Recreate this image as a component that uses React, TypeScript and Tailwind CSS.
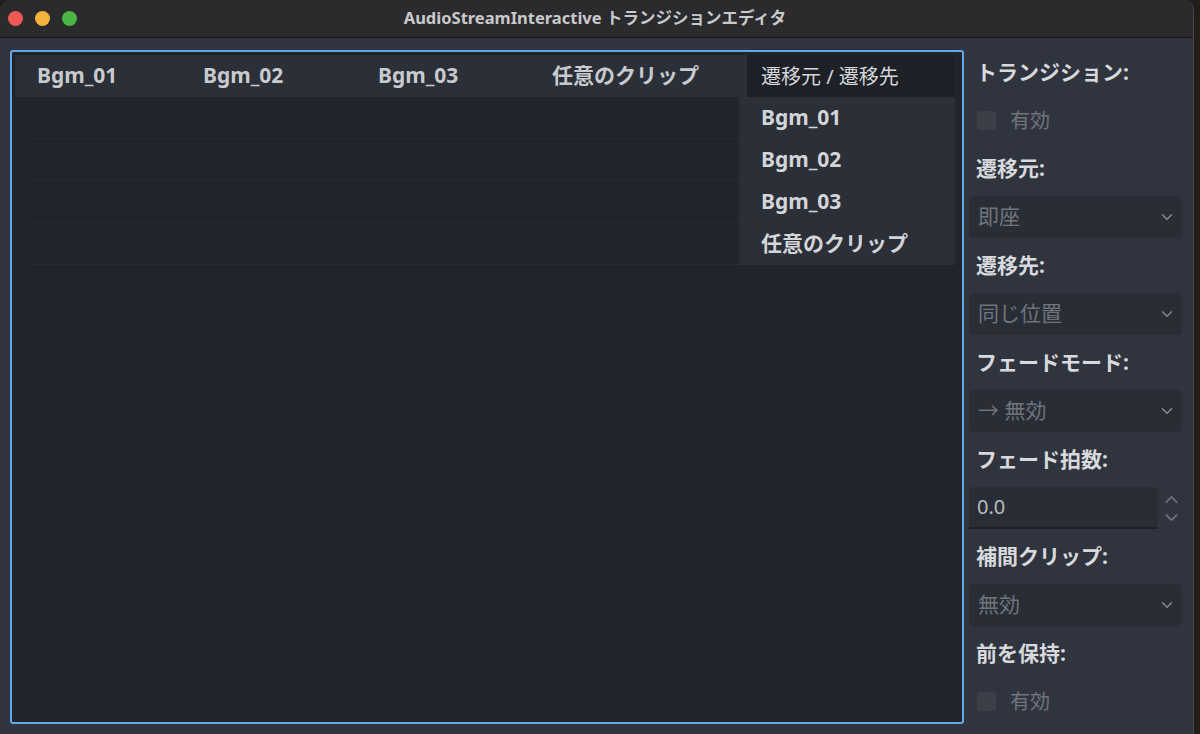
import { ChevronDown, ChevronUp } from "lucide-react";

const font = { fontFamily: '"Noto Sans", "Noto Sans CJK JP", sans-serif' };

const columns = [
  { name: "Bgm_01", w: "w-[166px]" },
  { name: "Bgm_02", w: "w-[175px]" },
  { name: "Bgm_03", w: "w-[174px]" },
  { name: "任意のクリップ", w: "w-[217px]" },
];

function Label({ text }: { text: string }) {
  return (
    <div className="h-[55px] flex items-center pl-[7px] text-[21px] font-bold text-[#d8d9dc]">
      {text}
    </div>
  );
}

function Select({ value }: { value: string }) {
  return (
    <div className="h-[42px] w-[213px] rounded-[5px] bg-[#292d35] flex items-center justify-between pl-[9px] pr-[6px] text-[21px] text-[#6f747d]">
      <span>{value}</span>
      <ChevronDown size={18} strokeWidth={2} className="text-[#858a93]" />
    </div>
  );
}

function Check() {
  return (
    <div className="h-[41px] flex items-center pl-[8px] gap-[14px] text-[20px] text-[#6f747d]">
      <div className="w-[19px] h-[19px] rounded-[3px] bg-[#3b3f48]" />
      <span>有効</span>
    </div>
  );
}

export default function App() {
  return (
    <div className="w-[1200px] h-[734px] bg-[#211e1a] overflow-hidden" style={font}>
      <div className="w-[1194px] h-[734px] rounded-t-[10px] overflow-hidden flex flex-col bg-[#2f343f] border-r border-[#4a4a4c]">
        {/* title bar */}
        <div className="h-[38px] shrink-0 bg-[#2b2b2e] border-b border-[#161618] flex items-center">
          <div className="flex gap-[12px] pl-[8px]">
            <div className="w-[15px] h-[15px] rounded-full bg-[#ee5a53]" />
            <div className="w-[15px] h-[15px] rounded-full bg-[#f4b43d]" />
            <div className="w-[15px] h-[15px] rounded-full bg-[#4ab542]" />
          </div>
          <div className="flex-1 text-center pr-[80px] text-[16.5px] font-bold text-[#c9c9cb]">
            AudioStreamInteractive トランジションエディタ
          </div>
        </div>

        <div className="flex-1 flex pl-[10px] pt-[12px]">
          {/* grid panel */}
          <div className="w-[954px] h-[674px] border-2 border-[#62a7ea] rounded-[3px] bg-[#21242b] pl-[3px] pt-[3px] pr-[7px] flex flex-col">
            <div className="h-[42px] flex bg-[#2b2f38] text-[21px] font-bold text-[#c9cacd]">
              {columns.map((c) => (
                <div key={c.name} className={`${c.w} pl-[22px] flex items-center`}>
                  {c.name}
                </div>
              ))}
              <div className="flex-1 bg-[#1d2026] pl-[14px] pt-[2px] flex items-center font-normal text-[20px] text-[#d4d5d8]">
                遷移元 / 遷移先
              </div>
            </div>
            <div className="flex">
              <div className="flex-1 pl-[16px]">
                {[0, 1, 2, 3].map((i) => (
                  <div key={i} className="h-[42px] border-b border-[#282b32]" />
                ))}
              </div>
              <div className="w-[216px] bg-[#2b2f38] text-[21px] font-bold text-[#d4d5d8]">
                {["Bgm_01", "Bgm_02", "Bgm_03", "任意のクリップ"].map((r) => (
                  <div key={r} className="h-[42px] pl-[22px] flex items-center">
                    {r}
                  </div>
                ))}
              </div>
            </div>
          </div>

          {/* inspector */}
          <div className="ml-[5px] flex flex-col -mt-[5px]">
            <Label text="トランジション:" />
            <Check />
            <Label text="遷移元:" />
            <Select value="即座" />
            <Label text="遷移先:" />
            <Select value="同じ位置" />
            <Label text="フェードモード:" />
            <Select value="→ 無効" />
            <Label text="フェード拍数:" />
            <div className="h-[42px] flex items-center">
              <div className="w-[189px] h-[42px] bg-[#292d35] border-b-2 border-[#1c1f25] rounded-t-[4px] flex items-center pl-[8px] text-[20px] text-[#b9bbbf]">
                0.0
              </div>
              <div className="flex flex-col items-center ml-[3px] -space-y-[3px] text-[#6d727b]">
                <ChevronUp size={21} strokeWidth={2} />
                <ChevronDown size={21} strokeWidth={2} />
              </div>
            </div>
            <Label text="補間クリップ:" />
            <Select value="無効" />
            <Label text="前を保持:" />
            <Check />
          </div>
        </div>
      </div>
    </div>
  );
}
